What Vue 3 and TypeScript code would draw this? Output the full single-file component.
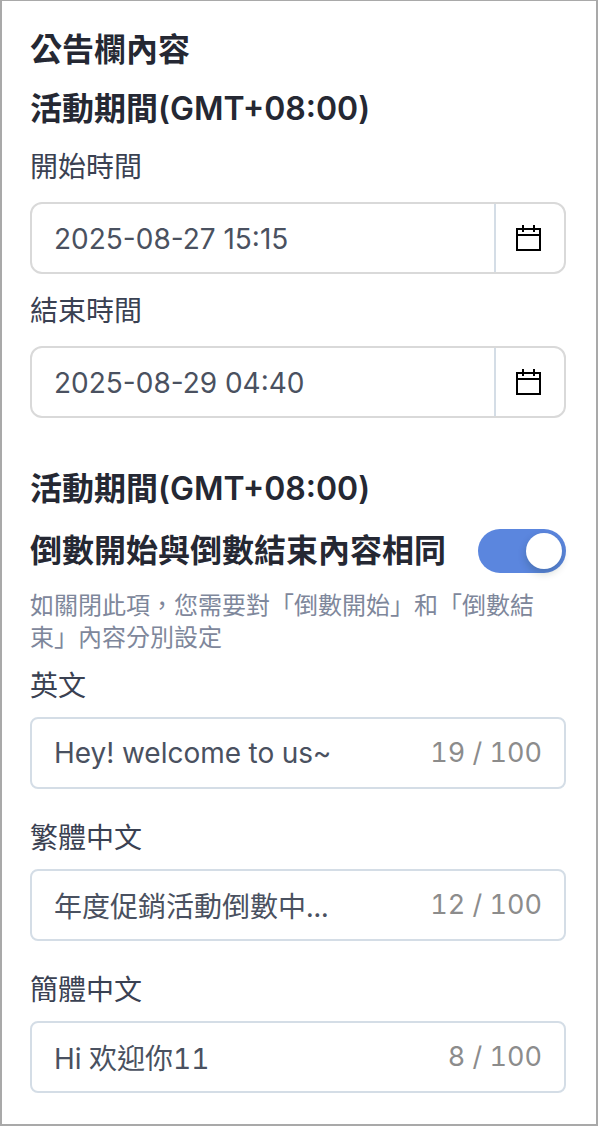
<script setup lang="ts">
import { reactive, ref } from 'vue'

interface DateField {
  id: string
  label: string
  value: string
}

interface TextField {
  id: string
  label: string
  value: string
  count: number
}

const limit = 100

const dates = reactive<DateField[]>([
  { id: 'start', label: '開始時間', value: '2025-08-27 15:15' },
  { id: 'end', label: '結束時間', value: '2025-08-29 04:40' },
])

const messages = reactive<TextField[]>([
  { id: 'en', label: '英文', value: 'Hey! welcome to us~', count: 19 },
  { id: 'zh-tw', label: '繁體中文', value: '年度促銷活動倒數中...', count: 12 },
  { id: 'zh-cn', label: '簡體中文', value: 'Hi 欢迎你11', count: 8 },
])

const sameContent = ref(true)

function updateCount(field: TextField) {
  field.count = field.value.length
}
</script>

<template>
  <main class="panel">
    <h1 class="title">公告欄內容</h1>

    <section class="period">
      <h2 class="title">活動期間(GMT+08:00)</h2>
      <div class="dates">
        <div v-for="d in dates" :key="d.id">
          <label class="label" :for="d.id">{{ d.label }}</label>
          <div class="box date-box">
            <input :id="d.id" v-model="d.value" class="input" type="text" />
            <button class="picker" type="button" :aria-label="d.label">
              <svg width="28" height="28" viewBox="0 0 28 28" fill="none" stroke="#000" stroke-width="2" aria-hidden="true">
                <path d="M3 5H26V26H3ZM3 11H26M9 1V8M20 1V8" />
              </svg>
            </button>
          </div>
        </div>
      </div>
    </section>

    <section class="content">
      <h2 class="title">活動期間(GMT+08:00)</h2>
      <div class="switch-row">
        <label class="title" for="same-content">倒數開始與倒數結束內容相同</label>
        <input id="same-content" v-model="sameContent" class="switch" type="checkbox" role="switch" />
      </div>
      <p class="help">如關閉此項，您需要對「倒數開始」和「倒數結束」內容分別設定</p>

      <div class="messages">
        <div v-for="m in messages" :key="m.id">
          <label class="label" :for="m.id">{{ m.label }}</label>
          <div class="box text-box">
            <input :id="m.id" v-model="m.value" class="input" type="text" :maxlength="limit" @input="updateCount(m)" />
            <span class="count">{{ m.count }} / {{ limit }}</span>
          </div>
        </div>
      </div>
    </section>
  </main>
</template>

<style>
body {
  margin: 0;
  background: #fff;
}
</style>

<style scoped>
.panel {
  box-sizing: border-box;
  min-height: 100vh;
  padding: 27px 30px 31px 28px;
  border: 2px solid #a9a9a9;
  border-top-width: 1px;
  background: #fff;
  font-family: Inter, "Noto Sans CJK TC", sans-serif;
  color: #3a4152;
}

.title {
  margin: 0;
  font-size: 32px;
  line-height: 44px;
  font-weight: 600;
  color: #252833;
}

.period {
  margin-top: 15px;
}

.dates {
  display: flex;
  flex-direction: column;
  gap: 16px;
  margin-top: 15px;
}

.label {
  display: block;
  font-size: 28px;
  line-height: 42px;
}

.box {
  display: flex;
  align-items: stretch;
  box-sizing: border-box;
  height: 72px;
  border: 2px solid #d4dde6;
  background: #fff;
}

.date-box {
  margin-top: 14px;
  border-color: #d9d9d9;
  border-radius: 12px;
}

.text-box {
  margin-top: 10px;
  padding-right: 22px;
  align-items: center;
  border-radius: 8px;
  font-variant-numeric: tabular-nums;
  font-variation-settings: "opsz" 32;
}

.input {
  flex: 1;
  min-width: 0;
  box-sizing: border-box;
  height: 100%;
  margin: 0;
  padding: 0 0 0 22px;
  border: 0;
  outline: 0;
  background: transparent;
  font-family: inherit;
  font-size: 28px;
  font-variant-numeric: inherit;
  font-variation-settings: inherit;
  color: #4a5160;
}

.date-box .input {
  padding-top: 2px;
}

.picker {
  display: flex;
  align-items: center;
  justify-content: center;
  box-sizing: border-box;
  width: 70px;
  padding: 0 4px 0 0;
  border: 0;
  border-left: 2px solid #d4dde6;
  background: transparent;
  cursor: pointer;
}

.count {
  font-size: 27px;
  line-height: 40px;
  color: #8c8c8c;
  white-space: nowrap;
}

.content {
  margin-top: 49px;
}

.switch-row {
  display: flex;
  align-items: center;
  justify-content: space-between;
  margin-top: 18px;
}

.switch {
  appearance: none;
  display: flex;
  flex: none;
  box-sizing: border-box;
  width: 88px;
  height: 44px;
  margin: 0;
  padding: 4px;
  border-radius: 22px;
  background: #bfbfbf;
  cursor: pointer;
}

.switch::before {
  content: "";
  width: 36px;
  height: 36px;
  border-radius: 50%;
  background: #fff;
  box-shadow: 0 4px 8px rgba(0, 35, 11, 0.2);
}

.switch:checked {
  justify-content: flex-end;
  background: #5b86de;
}

.help {
  margin: 17px 0 11px;
  font-size: 24px;
  line-height: 32px;
  color: #7e879b;
}

.messages {
  display: flex;
  flex-direction: column;
  gap: 28px;
}
</style>
